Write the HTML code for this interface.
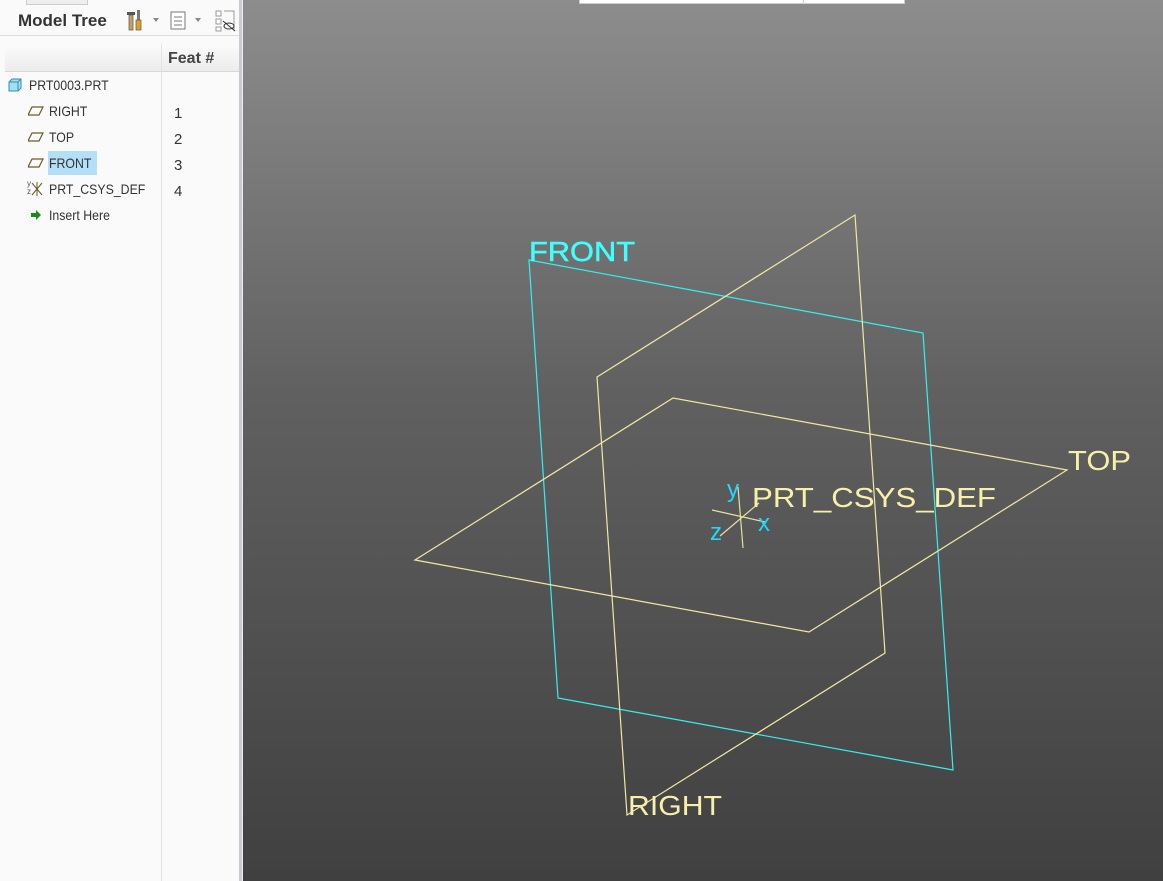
<!DOCTYPE html>
<html><head><meta charset="utf-8"><style>
html,body{margin:0;padding:0;width:1163px;height:881px;overflow:hidden;font-family:"Liberation Sans",sans-serif}
#left{position:absolute;left:0;top:0;width:239px;height:881px;background:#fafafa}
#bord{position:absolute;left:239px;top:0;width:3px;height:881px;background:#c8ccd0}
#bord2{position:absolute;left:242px;top:0;width:1px;height:881px;background:#eee}
#vp{position:absolute;left:243px;top:0;width:920px;height:881px;background:linear-gradient(#8d8d8d,#606060 45%,#404040)}
.t{position:absolute;font-size:14px;color:#333}
.n{transform:scaleX(0.88);transform-origin:0 0;white-space:nowrap}
</style></head><body>
<div id="left">
 <div style="position:absolute;left:26px;top:0;width:60px;height:4px;border:1px solid #ccc;border-top:none;background:#eee"></div>
 <div class="t" style="left:18px;top:11px;font-size:17px;font-weight:bold;color:#333">Model Tree</div>
 <svg style="position:absolute;left:125px;top:8px" width="115" height="25">
  <rect x="2" y="4" width="8" height="3" fill="#555"/><rect x="4" y="7" width="4" height="15" fill="#c9a060" stroke="#555" stroke-width=".7"/>
  <rect x="12" y="2" width="3" height="10" fill="#777"/><rect x="11" y="12" width="5" height="10" fill="#e0a020" stroke="#555" stroke-width=".7"/>
  <path d="M28 10l6 0l-3 4z" fill="#888"/>
  <rect x="46" y="4" width="14" height="17" fill="#fff" stroke="#777"/><path d="M49 9h8M49 13h8M49 17h8" stroke="#777"/>
  <path d="M70 10l6 0l-3 4z" fill="#888"/>
  <path d="M91 3h5v5h-5zM91 11h5v5h-5zM91 19h5v4h-5zM99 3h10v20" fill="none" stroke="#999"/>
  <ellipse cx="104" cy="18" rx="5" ry="3" fill="none" stroke="#333"/><path d="M98 13l12 10" stroke="#333"/>
 </svg>
 <div style="position:absolute;left:0;top:35px;width:239px;height:1px;background:#ddd"></div>
 <div style="position:absolute;left:5px;top:44px;width:234px;height:27px;background:linear-gradient(#fbfbfb,#ececec);border-bottom:1px solid #d8d8d8"></div>
 <div style="position:absolute;left:161px;top:44px;width:1px;height:837px;background:#e4e4e4"></div>
 <div class="t" style="left:168px;top:50px;font-size:16px;font-weight:bold;color:#444">Feat #</div>
 <svg style="position:absolute;left:8px;top:78px" width="14" height="14"><path d="M1 4l3-3h9v9l-3 3H1z" fill="#9fe0f5" stroke="#3a8ab0"/><path d="M1 4h9v9M10 4l3-3" fill="none" stroke="#3a8ab0"/></svg>
 <div class="t n" style="left:29px;top:77px">PRT0003.PRT</div>
 <svg style="position:absolute;left:28px;top:106px" width="16" height="10"><path d="M4 1h11l-4 8H0z" fill="none" stroke="#6b5a2a" stroke-width="1.2"/></svg>
 <div class="t n" style="left:49px;top:103px">RIGHT</div>
 <svg style="position:absolute;left:28px;top:132px" width="16" height="10"><path d="M4 1h11l-4 8H0z" fill="none" stroke="#6b5a2a" stroke-width="1.2"/></svg>
 <div class="t n" style="left:49px;top:129px">TOP</div>
 <svg style="position:absolute;left:28px;top:158px" width="16" height="10"><path d="M4 1h11l-4 8H0z" fill="none" stroke="#6b5a2a" stroke-width="1.2"/></svg>
 <div style="position:absolute;left:48px;top:151px;width:49px;height:24px;background:#b3e0f8"></div>
 <div class="t n" style="left:49px;top:155px">FRONT</div>
 <div style="position:absolute;left:27px;top:180px;font-size:8px;color:#555;line-height:8px">y<br>z</div>
 <svg style="position:absolute;left:30px;top:182px" width="15" height="15"><path d="M2 1l10 12M12 1L2 13M7 0v14" stroke="#6b5a2a"/></svg>
 <div class="t n" style="left:49px;top:181px">PRT_CSYS_DEF</div>
 <svg style="position:absolute;left:30px;top:209px" width="12" height="12"><path d="M1 4h5V1l5 5-5 5V8H1z" fill="#1a8a1a"/></svg>
 <div class="t n" style="left:49px;top:207px">Insert Here</div>
 <div class="t" style="left:174px;top:105px;font-size:15px">1</div>
 <div class="t" style="left:174px;top:131px;font-size:15px">2</div>
 <div class="t" style="left:174px;top:157px;font-size:15px">3</div>
 <div class="t" style="left:174px;top:183px;font-size:15px">4</div>
</div>
<div id="bord"></div><div id="bord2"></div>
<div id="vp"></div>
<div style="position:absolute;left:579px;top:0;width:324px;height:3px;background:#fff;border:1px solid #ccc;border-top:none"></div>
<div style="position:absolute;left:803px;top:0;width:1px;height:3px;background:#ccc"></div>
<svg style="position:absolute;left:0;top:0" width="1163" height="881">
 <g fill="none" stroke-width="1.2">
  <path d="M529 260L923 333L953 770L558 698Z" stroke="#33f0f0"/>
  <path d="M597 377L855 215L885 653L627 815Z" stroke="#f0e8a0"/>
  <path d="M415 560L673 398L1067 470L809 632Z" stroke="#f0e8a0"/>
  <path d="M738 487L743 548M712 510L765 522M720 536L759 503" stroke="#e8e0a0"/>
 </g>
 <g font-family="Liberation Sans,sans-serif" font-size="28" lengthAdjust="spacingAndGlyphs">
  <text x="529" y="261" fill="#40ffff" stroke="#40ffff" stroke-width=".5" textLength="106" lengthAdjust="spacingAndGlyphs">FRONT</text>
  <text x="1068" y="470" fill="#f8f0a8" textLength="63" lengthAdjust="spacingAndGlyphs">TOP</text>
  <text x="628" y="815" fill="#f8f0a8" textLength="94" lengthAdjust="spacingAndGlyphs">RIGHT</text>
  <text x="752" y="507" fill="#f8f0a8" textLength="244" lengthAdjust="spacingAndGlyphs">PRT_CSYS_DEF</text>
  <text x="727" y="497" fill="#20d8f8" font-size="24">y</text>
  <text x="710" y="540" fill="#20d8f8" font-size="24">z</text>
  <text x="758" y="531" fill="#20d8f8" font-size="24">x</text>
 </g>
</svg>
</body></html>
